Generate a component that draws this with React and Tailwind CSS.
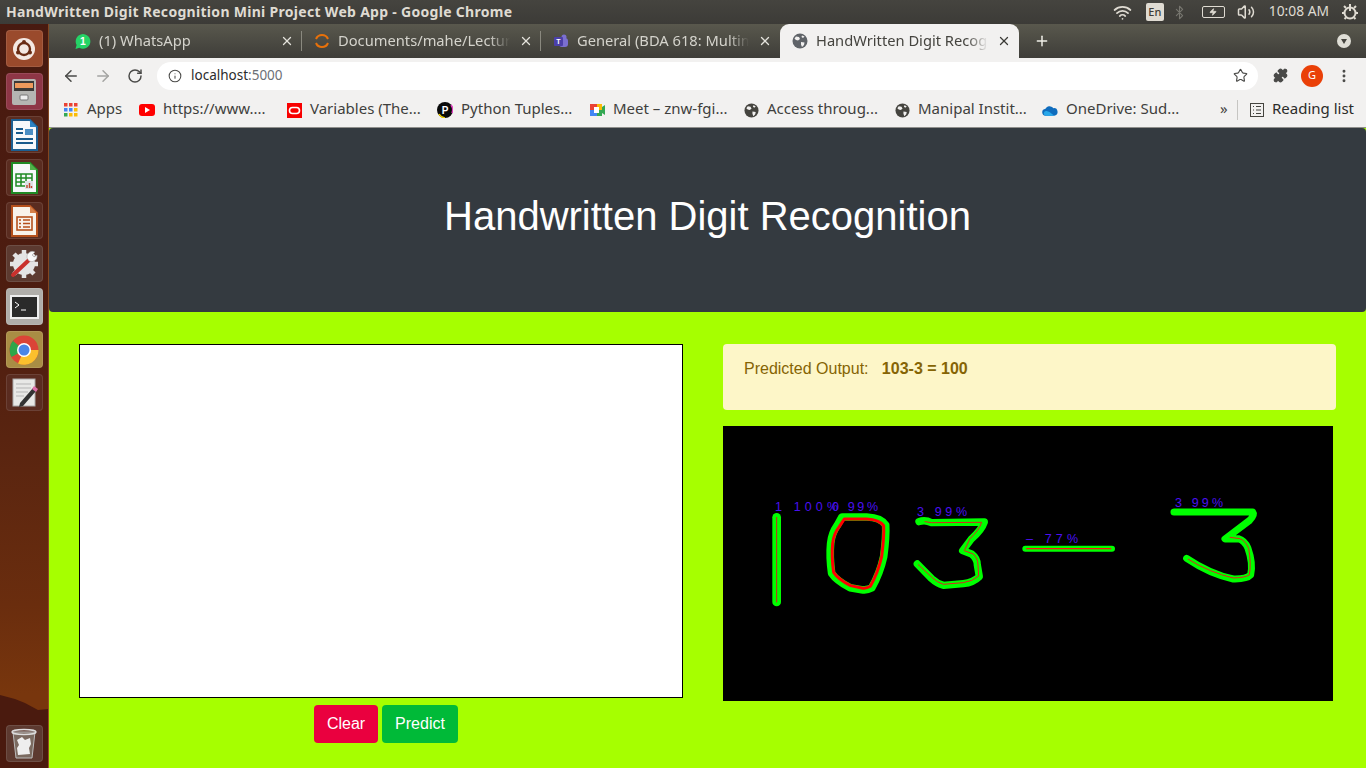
import React from "react";
import { ArrowLeft, ArrowRight, RotateCw, Info, Star, Puzzle, EllipsisVertical, Plus, X, Wifi, Volume2, Bluetooth, Zap } from "lucide-react";

const ui = { fontFamily: '"Noto Sans", sans-serif' };

function Tile({ cls, children }) {
  return <div className={"w-[37px] h-[37px] rounded-[4px] flex items-center justify-center shrink-0 border border-white/10 " + cls}>{children}</div>;
}

function Launcher() {
  return (
    <div className="relative w-[49px] shrink-0 overflow-hidden border-r border-r-[#a8642c]/60 bg-[linear-gradient(180deg,#481a10_0%,#4e1d10_40%,#5c2610_60%,#6a2d0e_78%,#78360d_90%)]">
      <svg className="absolute left-0 bottom-0 w-[49px] h-[73px]" viewBox="0 0 49 73"><path d="M0 0 L15 4 L25 8 L38 15 L49 14 V73 H0Z" fill="#4a1a0e" /></svg>
      <div className="relative h-full flex flex-col items-center pt-[6px] gap-[6px]">
        <Tile cls="bg-[#9a4a2c]">
          <svg width="24" height="24" viewBox="0 0 24 24"><circle cx="12" cy="12" r="11" fill="#f4e8e2" /><circle cx="12" cy="12" r="6" fill="none" stroke="#6a2c14" strokeWidth="2.4" /><circle cx="12" cy="5" r="2" fill="#6a2c14" /><circle cx="6" cy="15.5" r="2" fill="#6a2c14" /><circle cx="18" cy="15.5" r="2" fill="#6a2c14" /></svg>
        </Tile>
        <Tile cls="bg-[#8e3646]">
          <svg width="30" height="30" viewBox="0 0 30 30"><rect x="3" y="2" width="24" height="26" rx="2" fill="#b5b5b2" /><rect x="5" y="4" width="20" height="10" fill="#3c3a38" /><rect x="6" y="6" width="18" height="5" fill="#ee9a5c" /><rect x="11" y="18" width="8" height="5" rx="1" fill="#eee" stroke="#777" /></svg>
        </Tile>
        <Tile cls="bg-[#5a2c20]">
          <svg width="28" height="32" viewBox="0 0 28 32"><path d="M2 1H20L27 8V31H2Z" fill="#f6f8fa" stroke="#1c5f92" strokeWidth="2" /><path d="M20 1L27 8H20Z" fill="#2c83c4" /><path d="M6 10h7M6 14h7M6 20h17M6 24h17" stroke="#175a8c" strokeWidth="2" /><rect x="15" y="10" width="8" height="6" fill="#4a8ec4" /></svg>
        </Tile>
        <Tile cls="bg-[#5a2c20]">
          <svg width="28" height="32" viewBox="0 0 28 32"><path d="M2 1H20L27 8V31H2Z" fill="#f6f8fa" stroke="#1f8a24" strokeWidth="2" /><path d="M20 1L27 8H20Z" fill="#52b04a" /><path d="M6 12h16v12H6Z M6 16h16 M6 20h16 M11 12v12 M16 12v12" fill="none" stroke="#1f8a24" strokeWidth="1.5" /><rect x="15" y="19" width="8" height="8" fill="#dce2e8" /><path d="M17 26v-3M19.5 26v-5M21.5 26v-2" stroke="#c0462c" strokeWidth="1.4" /></svg>
        </Tile>
        <Tile cls="bg-[#5a2c20]">
          <svg width="28" height="32" viewBox="0 0 28 32"><path d="M2 1H20L27 8V31H2Z" fill="#f8f2ea" stroke="#b5501c" strokeWidth="2" /><path d="M20 1L27 8H20Z" fill="#d4804a" /><rect x="7" y="12" width="15" height="13" fill="none" stroke="#b5501c" strokeWidth="1.6" /><path d="M9 15h2M13 15h7M9 18.500h2M13 18.500h7M9 22h2M13 22h7" stroke="#b5501c" strokeWidth="1.6" /></svg>
        </Tile>
        <Tile cls="bg-[#5c3a30]">
          <svg width="30" height="30" viewBox="0 0 30 30"><circle cx="15" cy="15" r="11" fill="#e4e4e4" /><path d="M15 1v5M15 24v5M1 15h5M24 15h5M5 5l4 4M21 21l4 4M25 5l-4 4M9 21l-4 4" stroke="#e4e4e4" strokeWidth="4.500" /><path d="M4 26L20 11" stroke="#c9302c" strokeWidth="4" strokeLinecap="round" /><path d="M18 9a5.500 5.500 0 0 1 8-6l-3 3 2 2 3-2a5.500 5.500 0 0 1-8 6Z" fill="#f8f8f8" stroke="#999" strokeWidth="0.500" /></svg>
        </Tile>
        <Tile cls="bg-[#b0aeaa]">
          <svg width="29" height="24" viewBox="0 0 29 24"><rect x="1" y="1" width="27" height="22" fill="#2a2a2a" stroke="#eee" strokeWidth="2" /><path d="M5 7l4 3-4 3" fill="none" stroke="#fff" /><path d="M11 15h5" stroke="#fff" /></svg>
        </Tile>
        <Tile cls="bg-[#a98d44]">
          <svg width="30" height="30" viewBox="0 0 30 30"><circle cx="15" cy="15" r="14.500" fill="#db4437" /><path d="M15 15L2.500 22A14.500 14.500 0 0 1 4.500 5Z" fill="#2da64a" /><path d="M15 15H29.500A14.500 14.500 0 0 1 9 28.500Z" fill="#fbc02d" /><path d="M15 15L4 6A14.500 14.500 0 0 1 28 9H15Z" fill="#db4437" /><circle cx="15" cy="15" r="7" fill="#fff" /><circle cx="15" cy="15" r="5.500" fill="#4a86e8" /></svg>
        </Tile>
        <Tile cls="bg-[#5a2c20]">
          <svg width="28" height="30" viewBox="0 0 28 30"><rect x="3" y="1" width="22" height="27" fill="#e8e8e6" stroke="#aaa" /><path d="M6 6h15M6 10h15M6 14h12M6 18h8" stroke="#b5b5b5" /><path d="M10 25L23 10l3 3-13 15-4 1Z" fill="#333" /><path d="M22 11l2-3 4 3-2 3Z" fill="#e070a8" /></svg>
        </Tile>
        <div className="mt-auto mb-[6px]">
          <Tile cls="bg-[#5d3a30]">
            <svg width="26" height="32" viewBox="0 0 26 32"><path d="M2 4h22l-3 26H5Z" fill="#7a6a60" stroke="#bbb" /><ellipse cx="13" cy="4" rx="12" ry="2.500" fill="none" stroke="#ddd" strokeWidth="1.500" /><path d="M6 12l5-3 3 3 5-2 1 6-2 4 1 6-12 1-1-7 2-3Z" fill="#eee" /></svg>
          </Tile>
        </div>
      </div>
    </div>
  );
}

function Tab({ active, label, icon, sep }) {
  return (
    <div className={"relative w-[239px] h-[34px] flex items-center pl-[12px] shrink-0 " + (active ? "bg-[#f2f1f0] rounded-t-[9px] text-[#45443f]" : "text-[#d4d3cc]")}>
      <div className="w-[16px] h-[16px] flex items-center justify-center shrink-0">{icon}</div>
      <div className="ml-[8px] w-[172px] pb-[2px] whitespace-nowrap overflow-hidden text-[14.700px] [mask-image:linear-gradient(to_right,black_88%,transparent)]">{label}</div>
      <X size={14} strokeWidth={2.200} className={"ml-[9px] shrink-0 " + (active ? "text-[#3c3b37]" : "text-[#e4e3dc]")} />
      {sep && <div className="absolute right-0 top-[7px] h-[20px] w-px bg-[#8a897f]" />}
    </div>
  );
}

function FilledGlobe({ size = 16, color = "#5f6368" }) {
  return (
    <svg width={size} height={size} viewBox="0 0 16 16">
      <circle cx="8" cy="8" r="7.500" fill={color} />
      <path d="M4 3.500l3 .5 1 2-2 1.500-2-.5-1.500-1.500ZM9 9l3.500.5-.5 2.500-2 2-1-2.500ZM10 2.500l2.500 1L11 5l-1.500-1Z" fill="#f2f1f0" />
    </svg>
  );
}

function Bookmark({ w, icon, label }) {
  return (
    <div className={"flex items-center gap-[8px] shrink-0 whitespace-nowrap " + w}>
      <div className="w-[16px] h-[16px] flex items-center justify-center shrink-0">{icon}</div>
      <span className="pb-[3px]">{label}</span>
    </div>
  );
}

function Chrome() {
  return (
    <div className="shrink-0" style={ui}>
      <div className="h-[34px] flex items-end pl-[14px] bg-[linear-gradient(180deg,#59584d,#3e3d39)] relative">
        <Tab sep label="(1) WhatsApp" icon={<svg width="17" height="17" viewBox="0 0 17 17"><path d="M0.500 16.500l1.200-4.300a7.800 7.800 0 1 1 3 3Z" fill="#25d366" /><text x="8.500" y="12.500" textAnchor="middle" fontSize="11" fontWeight="700" fill="#fff" fontFamily="Liberation Sans">1</text></svg>} />
        <Tab sep label="Documents/mahe/Lectures" icon={<svg width="16" height="16" viewBox="0 0 16 16"><path d="M2 6a6.500 6.500 0 0 1 12 0M2 10a6.500 6.500 0 0 0 12 0" fill="none" stroke="#e8710a" strokeWidth="2" /></svg>} />
        <Tab label="General (BDA 618: Multimedia" icon={<svg width="16" height="16" viewBox="0 0 16 16"><circle cx="11" cy="4" r="2.500" fill="#7b6fd0" /><rect x="6" y="5" width="9" height="9" rx="3" fill="#7b6fd0" /><rect x="1" y="4" width="9" height="9" rx="1" fill="#4b3fa8" /><text x="5.500" y="11" textAnchor="middle" fontSize="7" fontWeight="700" fill="#fff" fontFamily="Liberation Sans">T</text></svg>} />
        <Tab active label="HandWritten Digit Recognition" icon={<FilledGlobe />} />
        <Plus size={16} strokeWidth={2.200} className="ml-[15px] mb-[9px] text-[#f0efe8]" />
        <div className="ml-auto mr-[15px] mb-[10px] w-[14px] h-[14px] rounded-full bg-[#dfded6] flex items-center justify-center">
          <div className="w-0 h-0 border-x-[3.500px] border-x-transparent border-t-[5px] border-t-[#45443f]" />
        </div>
      </div>
      <div className="h-[35px] bg-[#f2f1f0] flex items-center text-[#5f6368]">
        <ArrowLeft size={18} strokeWidth={2} className="ml-[13px] text-[#4a4a48]" />
        <ArrowRight size={18} strokeWidth={2} className="ml-[14px] text-[#a4a4a2]" />
        <RotateCw size={16} strokeWidth={2.200} className="ml-[15px] text-[#4a4a48]" />
        <div className="ml-[14px] w-[1101px] h-[28px] rounded-full bg-white flex items-center pl-[11px] pr-[10px]">
          <Info size={14} strokeWidth={1.800} className="text-[#4a4a48]" />
          <span className="ml-[9px] text-[13.500px] text-[#2c2c2c]">localhost<span className="text-[#6c7076]">:5000</span></span>
          <Star size={15} strokeWidth={1.800} className="ml-auto text-[#4a4a48]" />
        </div>
        <Puzzle size={15} fill="#4a4a48" className="ml-[15px] text-[#4a4a48]" />
        <div className="ml-[13px] w-[22px] h-[22px] rounded-full bg-[#ea4008] text-white text-[11px] flex items-center justify-center">G</div>
        <EllipsisVertical size={16} strokeWidth={2.400} className="ml-[13px] text-[#4a4a48]" />
      </div>
      <div className="h-[35px] bg-[#f2f1f0] border-b border-b-[#8f8f8c] flex items-center pl-[14px] text-[15px] text-[#3f3f3d]">
        <Bookmark w="w-[76px]" label="Apps" icon={<svg width="14" height="14" viewBox="0 0 14 14">{[["#ea4335", "#ea4335", "#ea4335"], ["#4285f4", "#4285f4", "#fbbc05"], ["#34a853", "#fbbc05", "#fbbc05"]].map((r, i) => r.map((c, j) => <rect key={i + "-" + j} x={j * 5} y={i * 5} width="3.500" height="3.500" fill={c} />))}</svg>} />
        <Bookmark w="w-[147px]" label="https://www...." icon={<svg width="16" height="12" viewBox="0 0 16 12"><rect width="16" height="12" rx="3" fill="#f00" /><path d="M6 3l5 3-5 3Z" fill="#fff" /></svg>} />
        <Bookmark w="w-[151px]" label="Variables (The..." icon={<svg width="15" height="15" viewBox="0 0 15 15"><rect width="15" height="15" fill="#f80000" /><rect x="2.500" y="4.500" width="10" height="6" rx="3" fill="none" stroke="#fff" strokeWidth="1.600" /></svg>} />
        <Bookmark w="w-[152px]" label="Python Tuples..." icon={<svg width="16" height="16" viewBox="0 0 16 16"><circle cx="8" cy="8" r="8" fill="#0a0a0a" /><path d="M2 12a8 8 0 0 0 6 4" stroke="#f0d000" strokeWidth="1.500" fill="none" /><path d="M14 3a8 8 0 0 1 1 8" stroke="#e040c0" strokeWidth="1.500" fill="none" /><text x="8" y="11.500" textAnchor="middle" fontSize="10" fontWeight="700" fill="#fff" fontFamily="Liberation Sans">P</text></svg>} />
        <Bookmark w="w-[154px]" label="Meet – znw-fgi..." icon={<svg width="16" height="16" viewBox="0 0 16 16"><rect x="1" y="2" width="7" height="6" fill="#ea4335" /><rect x="8" y="2" width="5" height="6" fill="#fbbc05" /><rect x="1" y="8" width="7" height="6" fill="#4285f4" /><rect x="8" y="8" width="5" height="6" fill="#34a853" /><rect x="5" y="5" width="5" height="6" fill="#fff" /><path d="M13 5l3-2v10l-3-2Z" fill="#34a853" /></svg>} />
        <Bookmark w="w-[151px]" label="Access throug..." icon={<FilledGlobe size={15} color="#45443f" />} />
        <Bookmark w="w-[148px]" label="Manipal Instit..." icon={<FilledGlobe size={15} color="#45443f" />} />
        <Bookmark w="w-[178px]" label="OneDrive: Sud..." icon={<svg width="17" height="11" viewBox="0 0 17 11"><path d="M4 11a3.500 3.500 0 0 1-.5-7A5 5 0 0 1 12 3a4 4 0 0 1 1 8Z" fill="#0f6cbd" /><path d="M4 11a2.500 2.500 0 0 1 1-5l3 1 5 4Z" fill="#28a8ea" /></svg>} />
        <span className="w-[17px] pb-[3px] text-[15px] text-[#45443f]">»</span>
        <div className="w-px h-[20px] bg-[#c6c5c2]" />
        <svg className="ml-[12px] shrink-0" width="14" height="14" viewBox="0 0 14 14" fill="none" stroke="#45443f"><rect x="0.500" y="0.500" width="13" height="13" /><path d="M3 3.500h1M6 3.500h5M3 7h1M6 7h5M3 10.500h1M6 10.500h5" /></svg>
        <span className="ml-[8px] pb-[3px] text-[#2c2c2a] whitespace-nowrap">Reading list</span>
      </div>
    </div>
  );
}

function Vision() {
  const lf = { fontFamily: '"Liberation Sans", sans-serif' };
  return (
    <svg viewBox="0 0 610 275" width="610" height="275" className="block" fill="none" strokeLinejoin="round" strokeLinecap="round">
      <rect width="610" height="275" fill="#000" />
      <g transform="translate(17 54) scale(0.3333)">
        <path d="M110 112V366" stroke="#00ff00" strokeWidth="26" />
        <path d="M110 112V366" stroke="#d02020" strokeWidth="3" />
        <path d="M306 111L380 111Q424 113 437 135Q439 170 431 230Q420 280 395 324Q380 332 365 329L330 323Q290 302 275 280Q268 230 272 190Q275 160 292 136Z" stroke="#00ff00" strokeWidth="23" />
        <path d="M313 117L380 117Q418 119 431 137Q433 170 425 230Q414 278 391 319Q378 327 365 324L332 317Q295 298 281 277Q274 230 278 190Q281 162 298 140Z" stroke="#ff0000" strokeWidth="9" />
        <path d="M537 125Q555 118 575 128L733 126Q725 150 695 176L668 212L695 222Q712 235 712 255L718 290Q700 308 670 311L610 316Q590 310 575 296L532 252" stroke="#00ff00" strokeWidth="22" />
        <path d="M555 125L575 128L725 127Q718 150 690 176L673 212L700 222Q714 235 714 255L716 288Q698 304 670 308L610 313Q590 306 578 294L535 254" stroke="#e02020" strokeWidth="3" />
      </g>
      <g transform="translate(287 54) scale(0.3333)">
        <path d="M46 206H306" stroke="#00ff00" strokeWidth="18" />
        <path d="M50 206H302" stroke="#ff1010" strokeWidth="4" />
        <path d="M492 96H728Q735 105 718 122L645 177L685 176Q705 182 714 205Q730 250 722 285Q710 298 670 297Q600 282 530 235" stroke="#00ff00" strokeWidth="21" />
        <path d="M660 172L690 176Q708 184 716 205Q724 250 718 285Q705 293 670 294Q600 278 535 238" stroke="#e02020" strokeWidth="3" />
      </g>
      <g fontSize="12.500" fill="#4a10f0" stroke="none" style={lf}>
        <text x="52" y="85" textLength="63" lengthAdjust="spacing">1 100%</text>
        <text x="109" y="85" textLength="46" lengthAdjust="spacing">0 99%</text>
        <text x="194" y="90" textLength="50" lengthAdjust="spacing">3 99%</text>
        <text x="303" y="117" textLength="52" lengthAdjust="spacing">– 77%</text>
        <text x="452" y="81" textLength="48" lengthAdjust="spacing">3 99%</text>
      </g>
    </svg>
  );
}

export default function App() {
  return (
    <div className="w-[1366px] h-[768px] overflow-hidden flex flex-col bg-[#a6ff00]">
      <div className="h-[24px] shrink-0 bg-[linear-gradient(180deg,#45443f,#3c3b37)] flex items-center pl-[6px] text-[#dfdbd2]" style={ui}>
        <span className="pb-[2px] text-[14px] font-bold tracking-[0.300px] whitespace-nowrap">HandWritten Digit Recognition Mini Project Web App - Google Chrome</span>
        <Wifi size={19} strokeWidth={2.200} className="ml-auto text-[#dfdbd2]" />
        <div className="ml-[14px] w-[18px] h-[18px] rounded-[2px] bg-[#dfdbd2] text-[#3c3b37] text-[11px] font-medium flex items-center justify-center">En</div>
        <Bluetooth size={15} strokeWidth={1.800} className="ml-[8px] text-[#77766f]" />
        <div className="ml-[15px] relative w-[23px] h-[12px] border border-[#dfdbd2] rounded-[2px] flex items-center justify-center">
          <Zap size={8} fill="#dfdbd2" className="text-[#dfdbd2]" />
        </div>
        <Volume2 size={18} strokeWidth={2} className="ml-[12px] text-[#dfdbd2]" />
        <span className="ml-[14px] pb-[1px] text-[13.800px] whitespace-nowrap">10:08 AM</span>
        <svg className="ml-[12px] mr-[7px]" width="18" height="18" viewBox="0 0 18 18" fill="none" stroke="#dfdbd2" strokeWidth="2"><circle cx="9" cy="10" r="5.500" /><path d="M9 1v7M3 3l2 2M15 3l-2 2M1 10h2M15 10h2M3.500 16l1.500-1.500M14.500 16L13 14.500" /></svg>
      </div>
      <div className="flex-1 flex min-h-0">
        <Launcher />
        <div className="flex-1 flex flex-col min-w-0">
          <Chrome />
          <div className="flex-1 flex flex-col" style={{ fontFamily: '"Liberation Sans", Arial, sans-serif' }}>
            <div className="h-[184px] shrink-0 bg-[#343a40] rounded-[4px] flex items-center justify-center pb-[8px]">
              <h1 className="text-[40px] leading-[48px] text-white">Handwritten Digit Recognition</h1>
            </div>
            <div className="flex pt-[32px] pl-[30px]">
              <div className="w-[604px] shrink-0 flex flex-col items-center">
                <div className="w-[604px] h-[354px] bg-white border border-black" />
                <div className="mt-[7px] ml-[10px] flex gap-[4px]">
                  <button className="w-[64px] h-[38px] rounded-[4px] bg-[#ea003f] text-white text-[16px]">Clear</button>
                  <button className="w-[76px] h-[38px] rounded-[4px] bg-[#00ba38] text-white text-[16px]">Predict</button>
                </div>
              </div>
              <div className="ml-[40px] flex flex-col">
                <div className="w-[613px] h-[66px] rounded-[4px] bg-[#fdf6c8] text-[#856404] text-[16px] px-[21px] pt-[13px] leading-[24px] whitespace-pre">Predicted Output:   <b>103-3 = 100</b></div>
                <div className="mt-[16px]"><Vision /></div>
              </div>
            </div>
          </div>
        </div>
      </div>
    </div>
  );
}
